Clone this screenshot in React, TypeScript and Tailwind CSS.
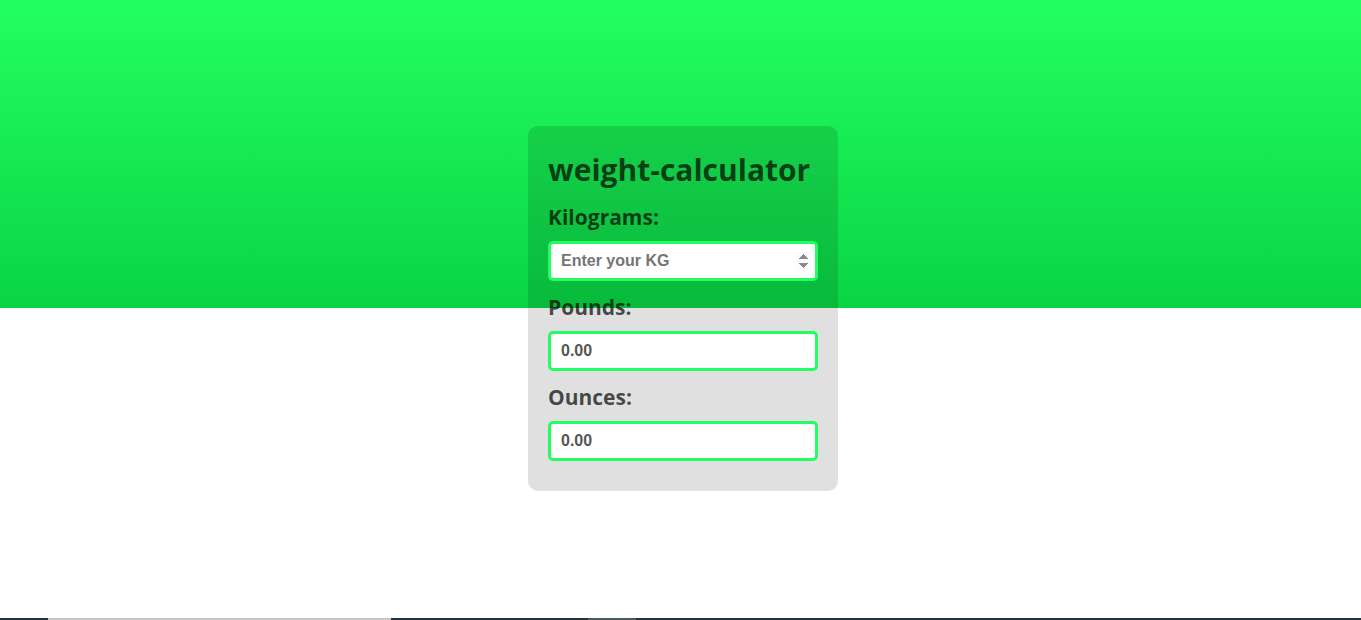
import { useState } from 'react';

export default function App() {
  const [kg, setKg] = useState('');

  const num = parseFloat(kg);
  const pounds = isNaN(num) ? 0 : num * 2.20462;
  const ounces = isNaN(num) ? 0 : num * 35.274;

  return (
    <div className="min-h-screen flex flex-col bg-[linear-gradient(to_bottom,#23ff60_0px,#0ad444_308px,#ffffff_308px)] font-['Open_Sans',sans-serif]">
      <div className="flex-1">
        <div className="w-[310px] ml-[528px] mt-[126px] rounded-[10px] bg-black/[0.12] px-5 pt-[26px] pb-[30px] text-black/70">
          <h1 className="text-[30px] leading-[36px] font-bold mb-[17px]">weight-calculator</h1>

          <label className="block text-[21px] leading-[25px] font-bold mb-[11px]">Kilograms:</label>
          <input
            type="number"
            autoFocus
            value={kg}
            onChange={(e) => setKg(e.target.value)}
            placeholder="Enter your KG"
            className="block w-full h-10 border-[3px] border-[#24fd61] rounded-[5px] bg-white pl-[10px] pr-1 font-['Liberation_Sans',Arial,sans-serif] font-bold text-base text-[#555] placeholder:text-[#757575] outline-none mb-[14px]"
          />

          <label className="block text-[21px] leading-[25px] font-bold mb-[11px]">Pounds:</label>
          <input
            type="text"
            readOnly
            value={pounds.toFixed(2)}
            className="block w-full h-10 border-[3px] border-[#24fd61] rounded-[5px] bg-white pl-[10px] font-['Liberation_Sans',Arial,sans-serif] font-bold text-base text-[#555] outline-none mb-[14px]"
          />

          <label className="block text-[21px] leading-[25px] font-bold mb-[11px]">Ounces:</label>
          <input
            type="text"
            readOnly
            value={ounces.toFixed(2)}
            className="block w-full h-10 border-[3px] border-[#24fd61] rounded-[5px] bg-white pl-[10px] font-['Liberation_Sans',Arial,sans-serif] font-bold text-base text-[#555] outline-none"
          />
        </div>
      </div>

      {/* taskbar strip at bottom edge */}
      <div className="h-[2px] flex bg-[#1f343b]">
        <div className="w-12" />
        <div className="w-[343px] bg-[#c6c6c6]" />
        <div className="w-[197px]" />
        <div className="w-12 bg-[#4c5a5e]" />
      </div>
    </div>
  );
}
